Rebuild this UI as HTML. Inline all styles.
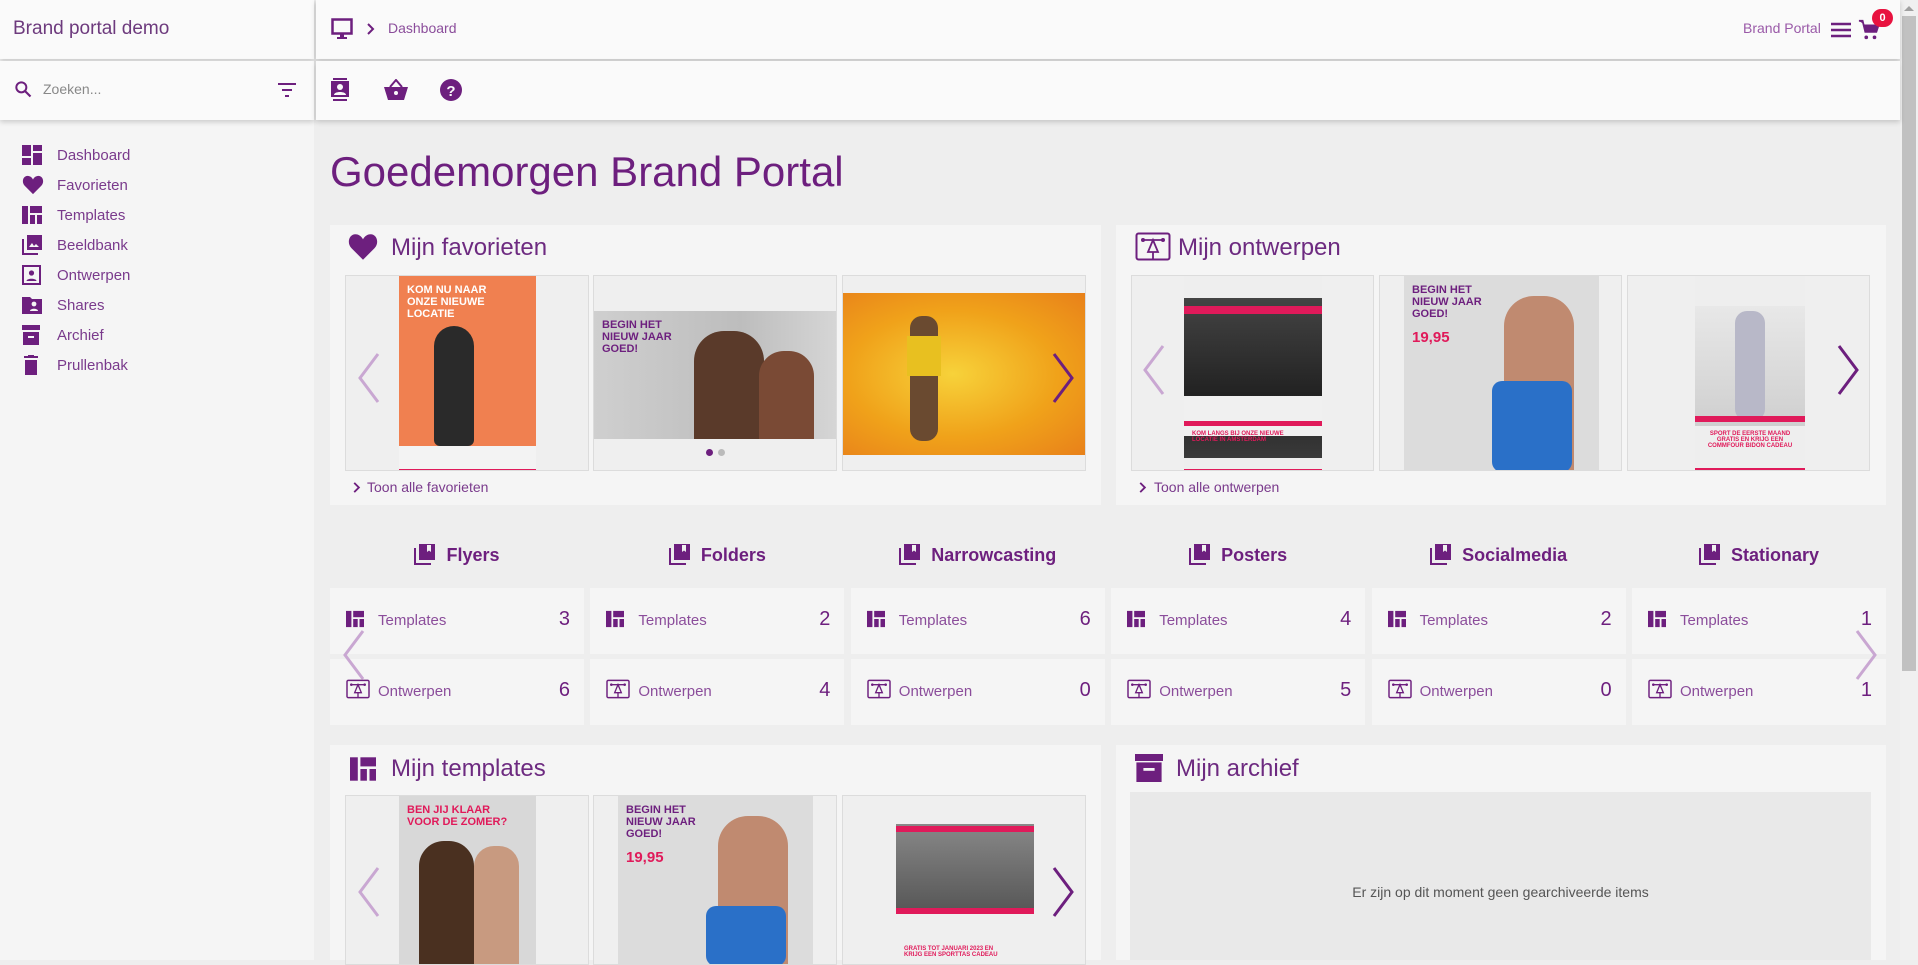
<!DOCTYPE html>
<html><head><meta charset="utf-8">
<style>
*{box-sizing:border-box;margin:0;padding:0}
body{width:1918px;height:960px;overflow:hidden;background:#eeeeee;font-family:"Liberation Sans",sans-serif;color:#6d1f7e;position:relative}
.a{position:absolute}
.pur{color:#6d1f7e}
.lp{color:#8b4d9b}
.card{background:#f5f5f5}
.tile{position:absolute;background:#efefef;border:1px solid #dcdcdc;overflow:hidden}
.chev{position:absolute;width:40px;height:60px}
.cat{position:absolute;font-size:18px;font-weight:bold;color:#6d1f7e;text-align:center;width:254px}
.box{position:absolute;background:#f5f5f5;width:254px;height:66px}
.box .l{position:absolute;left:48px;top:24px;font-size:15px;color:#8b4d9b}
.box .n{position:absolute;right:14px;top:20px;font-size:20px;color:#6d1f7e}
.box svg{position:absolute;left:16px;top:22px}
.nav{position:absolute;left:57px;font-size:15px;color:#7a3a8c}
.nav svg{position:absolute;left:-35px;top:-2px}
.poster{position:absolute;font-weight:bold;font-size:11px;line-height:12px;padding:8px}
</style></head><body>

<!-- sidebar -->
<div class="a" style="left:0;top:0;width:314px;height:960px;background:#f5f5f5"></div>
<div class="a" style="left:0;top:0;width:314px;height:59px;background:#fafafa;box-shadow:0 2px 5px rgba(0,0,0,.18);z-index:3"></div>
<div class="a lp" style="left:13px;top:18px;font-size:19px;color:#6d3a7d;z-index:4">Brand portal demo</div>
<div class="a" style="left:0;top:61px;width:314px;height:59px;background:#fafafa;box-shadow:0 2px 5px rgba(0,0,0,.18);z-index:3"></div>
<svg class="a" style="left:13px;top:79px;z-index:4" width="20" height="20" viewBox="0 0 24 24"><circle cx="10" cy="10" r="6" fill="none" stroke="#6d1f7e" stroke-width="2.4"/><path d="M14.5 14.5L21 21" stroke="#6d1f7e" stroke-width="2.6"/></svg>
<div class="a" style="left:43px;top:81px;font-size:14px;color:#888;z-index:4">Zoeken...</div>
<svg class="a" style="left:277px;top:82px;z-index:4" width="20" height="16" viewBox="0 0 20 16"><path d="M1 2h18M5 8h10M8 14h4" stroke="#6d1f7e" stroke-width="2"/></svg>

<div class="nav" style="top:147px"><svg width="20" height="20" viewBox="0 0 20 20" fill="#6d1f7e"><rect x="0" y="0" width="9" height="11"/><rect x="11" y="0" width="9" height="6"/><rect x="0" y="13" width="9" height="7"/><rect x="11" y="8" width="9" height="12"/></svg>Dashboard</div>
<div class="nav" style="top:177px"><svg width="22" height="20" viewBox="0 0 24 22"><path d="M12 21L3 12C-1 8 1 1 6 1c3 0 5 2 6 4 1-2 3-4 6-4 5 0 7 7 3 11z" fill="#6d1f7e"/></svg>Favorieten</div>
<div class="nav" style="top:207px"><svg width="20" height="20" viewBox="0 0 20 20" fill="#6d1f7e"><rect x="0" y="1" width="6" height="18"/><rect x="8" y="1" width="12" height="7"/><rect x="8" y="10" width="5" height="9"/><rect x="15" y="10" width="5" height="9"/></svg>Templates</div>
<div class="nav" style="top:237px"><svg width="20" height="20" viewBox="0 0 20 20"><rect x="5" y="0" width="15" height="15" fill="#6d1f7e"/><path d="M7 12l3-4 2 3 2-2 3 3z" fill="#f5f5f5"/><path d="M1 4v15h15" fill="none" stroke="#6d1f7e" stroke-width="2"/></svg>Beeldbank</div>
<div class="nav" style="top:267px"><svg width="20" height="20" viewBox="0 0 20 20"><rect x="1" y="1" width="17" height="18" fill="none" stroke="#6d1f7e" stroke-width="2"/><circle cx="9.5" cy="8" r="2.6" fill="#6d1f7e"/><path d="M4.5 16c0-3 10-3 10 0z" fill="#6d1f7e"/></svg>Ontwerpen</div>
<div class="nav" style="top:297px"><svg width="22" height="20" viewBox="0 0 22 20"><path d="M0 2h8l2 2h10v15H0z" fill="#6d1f7e"/><circle cx="12" cy="9" r="2.4" fill="#f5f5f5"/><path d="M8 16c0-3 8-3 8 0z" fill="#f5f5f5"/></svg>Shares</div>
<div class="nav" style="top:327px"><svg width="20" height="20" viewBox="0 0 20 20" fill="#6d1f7e"><rect x="0" y="0" width="18" height="5"/><rect x="1" y="7" width="16" height="13"/><rect x="6" y="11" width="6" height="2" fill="#f5f5f5"/></svg>Archief</div>
<div class="nav" style="top:357px"><svg width="20" height="20" viewBox="0 0 20 20" fill="#6d1f7e"><rect x="2" y="1" width="14" height="2"/><rect x="6" y="0" width="6" height="2"/><rect x="3" y="5" width="12" height="15"/></svg>Prullenbak</div>

<!-- top bars -->
<div class="a" style="left:316px;top:0;width:1584px;height:59px;background:#fafafa;box-shadow:0 2px 5px rgba(0,0,0,.18);z-index:3"></div>
<svg class="a" style="left:331px;top:18px;z-index:4" width="22" height="22" viewBox="0 0 22 22"><rect x="1.5" y="1.5" width="19" height="14" fill="none" stroke="#6d1f7e" stroke-width="2.5"/><rect x="9" y="16" width="4" height="3" fill="#6d1f7e"/><rect x="6" y="19" width="10" height="2" fill="#6d1f7e"/></svg>
<svg class="a" style="left:366px;top:22px;z-index:4" width="10" height="14" viewBox="0 0 10 14"><path d="M2 2l5 5-5 5" fill="none" stroke="#6d1f7e" stroke-width="2"/></svg>
<div class="a" style="left:388px;top:20px;font-size:14px;color:#8b4d9b;z-index:4">Dashboard</div>
<div class="a" style="left:1743px;top:20px;font-size:14px;color:#9a5aa8;z-index:4">Brand Portal</div>
<svg class="a" style="left:1831px;top:22px;z-index:4" width="20" height="16" viewBox="0 0 20 16"><path d="M0 2h20M0 8h20M0 14h20" stroke="#6d1f7e" stroke-width="2.4"/></svg>
<svg class="a" style="left:1858px;top:19px;z-index:4" width="22" height="22" viewBox="0 0 24 24"><path d="M1 2h4l3 12h12l3-8H7" fill="#6d1f7e"/><path d="M1 2h4l3 12h12l3-9" fill="none" stroke="#6d1f7e" stroke-width="2"/><circle cx="9" cy="20" r="2" fill="#6d1f7e"/><circle cx="18" cy="20" r="2" fill="#6d1f7e"/></svg>
<div class="a" style="left:1872px;top:9px;width:21px;height:18px;border-radius:9px;background:#e8123f;color:#fff;font-size:11px;font-weight:bold;text-align:center;line-height:18px;z-index:5">0</div>
<div class="a" style="left:316px;top:61px;width:1584px;height:59px;background:#fafafa;box-shadow:0 2px 5px rgba(0,0,0,.18);z-index:3"></div>
<svg class="a" style="left:331px;top:78px;z-index:4" width="18" height="24" viewBox="0 0 18 24"><rect x="0" y="3" width="18" height="16" fill="#6d1f7e"/><rect x="2" y="0" width="14" height="2" fill="#6d1f7e"/><rect x="2" y="21" width="14" height="2" fill="#6d1f7e"/><circle cx="9" cy="9" r="3" fill="#fafafa"/><path d="M3 17c0-4 12-4 12 0z" fill="#fafafa"/></svg>
<svg class="a" style="left:384px;top:79px;z-index:4" width="24" height="22" viewBox="0 0 24 22"><path d="M0 8h24l-4 13H4z" fill="#6d1f7e"/><path d="M6 8l6-7 6 7" fill="none" stroke="#6d1f7e" stroke-width="2"/><circle cx="12" cy="14" r="2" fill="#fafafa"/></svg>
<svg class="a" style="left:440px;top:79px;z-index:4" width="22" height="22" viewBox="0 0 22 22"><circle cx="11" cy="11" r="11" fill="#6d1f7e"/><text x="11" y="17" font-family="Liberation Sans" font-weight="bold" font-size="15" fill="#fafafa" text-anchor="middle">?</text></svg>

<!-- scrollbar -->
<div class="a" style="left:1900px;top:0;width:18px;height:960px;background:#f0f0f0"></div>
<div class="a" style="left:1902px;top:16px;width:14px;height:655px;background:#c1c1c1"></div>
<div class="a" style="left:1904px;top:6px;width:0;height:0;border-left:5px solid transparent;border-right:5px solid transparent;border-bottom:5px solid #a0a0a0"></div>

<!-- title -->
<div class="a" style="left:330px;top:148px;font-size:42px;color:#6d1f7e">Goedemorgen Brand Portal</div>

<!-- favorieten card -->
<div class="a card" style="left:330px;top:225px;width:771px;height:280px"></div>
<svg class="a" style="left:347px;top:233px" width="32" height="28" viewBox="0 0 24 22"><path d="M12 21L3 12C-1 8 1 1 6 1c3 0 5 2 6 4 1-2 3-4 6-4 5 0 7 7 3 11z" fill="#6d1f7e"/></svg>
<div class="a" style="left:391px;top:234px;font-size:24px;color:#6d2a80">Mijn favorieten</div>
<div class="tile" style="left:345px;top:275px;width:244px;height:196px">
 <div class="poster" style="left:53px;top:0;width:137px;height:196px;background:#f08050;color:#fff">KOM NU NAAR<br>ONZE NIEUWE<br>LOCATIE
  <div class="a" style="left:35px;top:50px;width:40px;height:120px;background:#2a2a2a;border-radius:20px 20px 6px 6px"></div>
  <div class="a" style="left:0;top:170px;width:137px;height:26px;background:#f3f3f3"></div>
  <div class="a" style="left:0;top:193px;width:137px;height:3px;background:#e01a5a"></div></div>
</div>
<div class="tile" style="left:593px;top:275px;width:244px;height:196px">
 <div class="poster" style="left:0;top:35px;width:244px;height:128px;background:linear-gradient(90deg,#cfcfcf,#bdbdbd 60%,#d6d6d6);color:#6d1f7e">BEGIN HET<br>NIEUW JAAR<br>GOED!
  <div class="a" style="left:100px;top:20px;width:70px;height:108px;background:#5a3a2a;border-radius:30px 30px 0 0"></div>
  <div class="a" style="left:165px;top:40px;width:55px;height:88px;background:#7a4a35;border-radius:25px 25px 0 0"></div></div>
 <div class="a" style="left:112px;top:173px;width:7px;height:7px;border-radius:4px;background:#6d1f7e"></div>
 <div class="a" style="left:124px;top:173px;width:7px;height:7px;border-radius:4px;background:#bbb"></div>
</div>
<div class="tile" style="left:842px;top:275px;width:244px;height:196px">
 <div class="a" style="left:0;top:17px;width:244px;height:162px;background:radial-gradient(ellipse at 45% 50%,#f7d23a,#f0a21a 55%,#e8801a)"></div>
 <div class="a" style="left:67px;top:40px;width:28px;height:125px;background:#6a4a30;border-radius:12px"></div>
 <div class="a" style="left:64px;top:60px;width:34px;height:40px;background:#e8c020"></div>
</div>
<svg class="chev" style="left:350px;top:348px" viewBox="0 0 40 60"><path d="M28 6L10 30l18 24" fill="none" stroke="#c9a7d2" stroke-width="3"/></svg>
<svg class="chev" style="left:1042px;top:348px" viewBox="0 0 40 60"><path d="M12 6l18 24-18 24" fill="none" stroke="#6d1f7e" stroke-width="3"/></svg>
<svg class="a" style="left:352px;top:481px" width="10" height="13" viewBox="0 0 10 14"><path d="M2 2l5 5-5 5" fill="none" stroke="#6d1f7e" stroke-width="2"/></svg>
<div class="a" style="left:367px;top:479px;font-size:14px;color:#7a3a8c">Toon alle favorieten</div>

<!-- ontwerpen card -->
<div class="a card" style="left:1116px;top:225px;width:770px;height:280px"></div>
<svg class="a" style="left:1135px;top:232px" width="36" height="32" viewBox="0 0 36 32"><rect x="1.5" y="1.5" width="33" height="26" rx="2" fill="none" stroke="#6d1f7e" stroke-width="2"/><path d="M8 8h20M18 8l-5 12h10z M18 20v8" fill="none" stroke="#6d1f7e" stroke-width="1.8"/><circle cx="8" cy="8" r="2" fill="#6d1f7e"/><circle cx="28" cy="8" r="2" fill="#6d1f7e"/></svg>
<div class="a" style="left:1178px;top:234px;font-size:24px;color:#6d2a80">Mijn ontwerpen</div>
<div class="tile" style="left:1131px;top:275px;width:243px;height:196px">
 <div class="a" style="left:52px;top:0;width:138px;height:196px;background:#eeeeee">
  <div class="a" style="left:0;top:22px;width:138px;height:160px;background:linear-gradient(#444,#222 60%,#3a3a3a)"></div>
  <div class="a" style="left:0;top:30px;width:138px;height:8px;background:#e01a5a"></div>
  <div class="a" style="left:0;top:120px;width:138px;height:40px;background:#f0f0f0"></div>
  <div class="a" style="left:0;top:145px;width:138px;height:5px;background:#e01a5a"></div>
  <div class="a" style="left:8px;top:155px;font-size:6px;font-weight:bold;color:#e01a5a">KOM LANGS BIJ ONZE NIEUWE<br>LOCATIE IN AMSTERDAM</div>
  <div class="a" style="left:0;top:193px;width:138px;height:3px;background:#e01a5a"></div></div>
</div>
<div class="tile" style="left:1379px;top:275px;width:243px;height:196px">
 <div class="poster" style="left:24px;top:0;width:195px;height:196px;background:#dcdcdc;color:#6d1f7e">BEGIN HET<br>NIEUW JAAR<br>GOED!<br><br><span style="font-size:15px;color:#e01a5a">19,95</span>
  <div class="a" style="left:100px;top:20px;width:70px;height:176px;background:#c08a70;border-radius:30px 30px 0 0"></div>
  <div class="a" style="left:88px;top:105px;width:80px;height:91px;background:#2a70c8;border-radius:10px"></div></div>
</div>
<div class="tile" style="left:1627px;top:275px;width:243px;height:196px">
 <div class="a" style="left:67px;top:0;width:110px;height:196px;background:#eeeeee">
  <div class="a" style="left:0;top:30px;width:110px;height:120px;background:linear-gradient(#e8e8e8,#cfcfcf)"></div>
  <div class="a" style="left:40px;top:35px;width:30px;height:110px;background:#b8b8c8;border-radius:12px"></div>
  <div class="a" style="left:0;top:140px;width:110px;height:6px;background:#e01a5a"></div>
  <div class="a" style="left:8px;top:155px;font-size:6px;font-weight:bold;color:#e01a5a;text-align:center;width:94px">SPORT DE EERSTE MAAND<br>GRATIS EN KRIJG EEN<br>COMMFOUR BIDON CADEAU</div>
  <div class="a" style="left:0;top:192px;width:110px;height:4px;background:#e01a5a"></div></div>
</div>
<svg class="chev" style="left:1135px;top:340px" viewBox="0 0 40 60"><path d="M28 6L10 30l18 24" fill="none" stroke="#c9a7d2" stroke-width="3"/></svg>
<svg class="chev" style="left:1827px;top:340px" viewBox="0 0 40 60"><path d="M12 6l18 24-18 24" fill="none" stroke="#6d1f7e" stroke-width="3"/></svg>
<svg class="a" style="left:1138px;top:481px" width="10" height="13" viewBox="0 0 10 14"><path d="M2 2l5 5-5 5" fill="none" stroke="#6d1f7e" stroke-width="2"/></svg>
<div class="a" style="left:1154px;top:479px;font-size:14px;color:#7a3a8c">Toon alle ontwerpen</div>

<!-- categories -->
<div id="cats"></div>
<script>
var names=["Flyers","Folders","Narrowcasting","Posters","Socialmedia","Stationary"],t=[3,2,6,4,2,1],o=[6,4,0,5,0,1],h="";
var tpl='<svg width="18" height="18" viewBox="0 0 20 20" fill="#6d1f7e"><rect x="0" y="1" width="6" height="18"/><rect x="8" y="1" width="12" height="7"/><rect x="8" y="10" width="5" height="9"/><rect x="15" y="10" width="5" height="9"/></svg>';
var ont='<svg width="24" height="22" viewBox="0 0 36 32" style="top:20px"><rect x="1.5" y="1.5" width="33" height="26" rx="2" fill="none" stroke="#6d1f7e" stroke-width="2.2"/><path d="M8 8h20M18 8l-5 12h10z M18 20v8" fill="none" stroke="#6d1f7e" stroke-width="2"/><circle cx="8" cy="8" r="2" fill="#6d1f7e"/><circle cx="28" cy="8" r="2" fill="#6d1f7e"/></svg>';
var bk='<svg width="22" height="22" viewBox="0 0 22 22" style="vertical-align:-4px;margin-right:10px"><path d="M1 5v16h16" fill="none" stroke="#6d1f7e" stroke-width="2"/><rect x="5" y="1" width="16" height="16" fill="#6d1f7e"/><path d="M13 2v7l2-1.5 2 1.5V2" fill="#f0f0f0"/></svg>';
for(var i=0;i<6;i++){var x=330+i*260.4;
h+='<div class="cat" style="left:'+x+'px;top:543px">'+bk+names[i]+'</div>';
h+='<div class="box" style="left:'+x+'px;top:588px">'+tpl+'<span class="l">Templates</span><span class="n">'+t[i]+'</span></div>';
h+='<div class="box" style="left:'+x+'px;top:659px">'+ont+'<span class="l">Ontwerpen</span><span class="n">'+o[i]+'</span></div>';}
document.getElementById("cats").innerHTML=h;
</script>
<svg class="chev" style="left:335px;top:625px" viewBox="0 0 40 60"><path d="M28 6L10 30l18 24" fill="none" stroke="#c9a7d2" stroke-width="3"/></svg>
<svg class="chev" style="left:1845px;top:625px" viewBox="0 0 40 60"><path d="M12 6l18 24-18 24" fill="none" stroke="#c9a7d2" stroke-width="3"/></svg>

<!-- templates card -->
<div class="a card" style="left:330px;top:745px;width:771px;height:215px"></div>
<svg class="a" style="left:349px;top:756px" width="28" height="26" viewBox="0 0 20 20" fill="#6d1f7e"><rect x="0" y="1" width="6" height="18"/><rect x="8" y="1" width="12" height="7"/><rect x="8" y="10" width="5" height="9"/><rect x="15" y="10" width="5" height="9"/></svg>
<div class="a" style="left:391px;top:755px;font-size:24px;color:#6d2a80">Mijn templates</div>
<div class="tile" style="left:345px;top:795px;width:244px;height:170px">
 <div class="poster" style="left:53px;top:0;width:137px;height:170px;background:#d8d8d8;color:#e01a5a">BEN JIJ KLAAR<br>VOOR DE ZOMER?
  <div class="a" style="left:20px;top:45px;width:55px;height:125px;background:#4a3020;border-radius:25px 25px 0 0"></div>
  <div class="a" style="left:75px;top:50px;width:45px;height:120px;background:#c89a80;border-radius:20px 20px 0 0"></div></div>
</div>
<div class="tile" style="left:593px;top:795px;width:244px;height:170px">
 <div class="poster" style="left:24px;top:0;width:195px;height:170px;background:#dcdcdc;color:#6d1f7e">BEGIN HET<br>NIEUW JAAR<br>GOED!<br><br><span style="font-size:15px;color:#e01a5a">19,95</span>
  <div class="a" style="left:100px;top:20px;width:70px;height:150px;background:#c08a70;border-radius:30px 30px 0 0"></div>
  <div class="a" style="left:88px;top:110px;width:80px;height:60px;background:#2a70c8;border-radius:10px"></div></div>
</div>
<div class="tile" style="left:842px;top:795px;width:244px;height:170px">
 <div class="a" style="left:53px;top:0;width:138px;height:170px;background:#efefef">
  <div class="a" style="left:0;top:28px;width:138px;height:90px;background:linear-gradient(#888,#555)"></div>
  <div class="a" style="left:0;top:30px;width:138px;height:6px;background:#e01a5a"></div>
  <div class="a" style="left:0;top:112px;width:138px;height:6px;background:#e01a5a"></div>
  <div class="a" style="left:8px;top:150px;font-size:6px;font-weight:bold;color:#e01a5a">GRATIS TOT JANUARI 2023 EN<br>KRIJG EEN SPORTTAS CADEAU</div></div>
</div>
<svg class="chev" style="left:350px;top:862px" viewBox="0 0 40 60"><path d="M28 6L10 30l18 24" fill="none" stroke="#c9a7d2" stroke-width="3"/></svg>
<svg class="chev" style="left:1042px;top:862px" viewBox="0 0 40 60"><path d="M12 6l18 24-18 24" fill="none" stroke="#6d1f7e" stroke-width="3"/></svg>

<!-- archief card -->
<div class="a card" style="left:1116px;top:745px;width:770px;height:215px"></div>
<svg class="a" style="left:1135px;top:753px" width="28" height="30" viewBox="0 0 20 20" fill="#6d1f7e"><rect x="0" y="0" width="20" height="5"/><rect x="1" y="6" width="18" height="14"/><rect x="6" y="10" width="8" height="2" fill="#f5f5f5"/></svg>
<div class="a" style="left:1176px;top:755px;font-size:24px;color:#6d2a80">Mijn archief</div>
<div class="a" style="left:1130px;top:792px;width:741px;height:168px;background:#e9e9e9"></div>
<div class="a" style="left:1130px;top:884px;width:741px;text-align:center;font-size:14px;color:#555">Er zijn op dit moment geen gearchiveerde items</div>
</body></html>
